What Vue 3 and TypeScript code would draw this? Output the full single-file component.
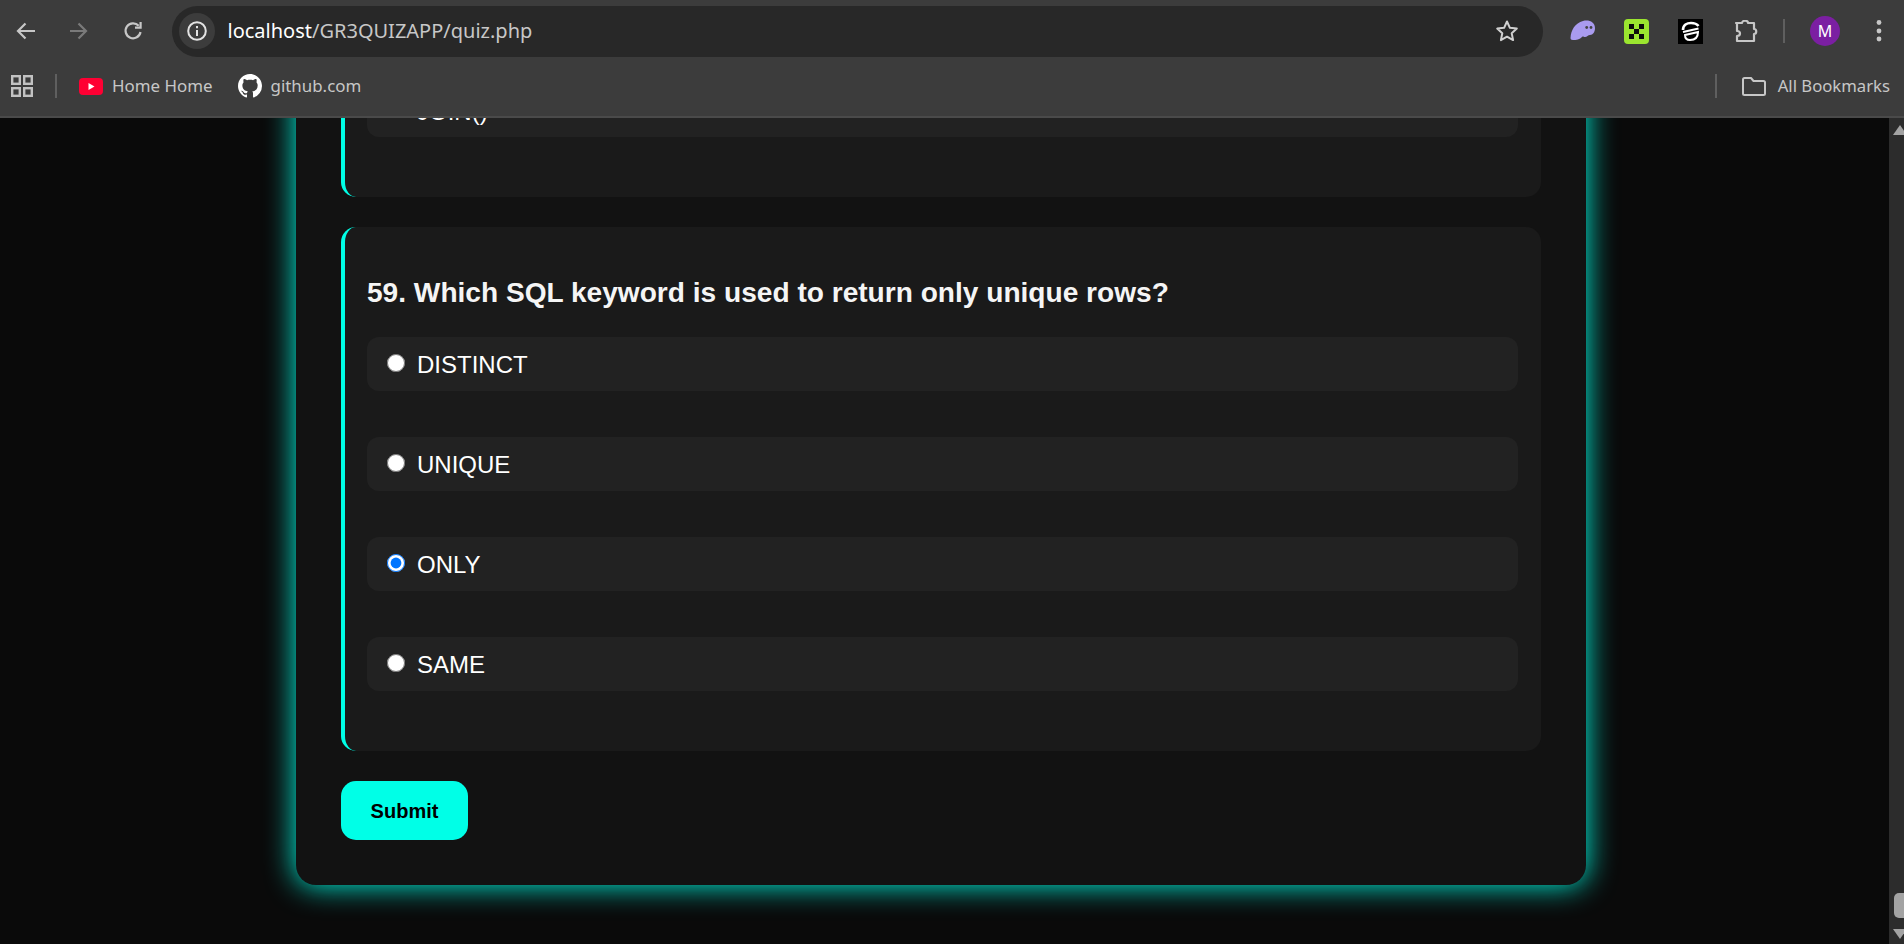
<script setup lang="ts">
const options: string[] = ['DISTINCT', 'UNIQUE', 'ONLY', 'SAME']
const selected = 'ONLY'
</script>

<template>
  <div class="window">
    <header class="chrome">
      <div class="toolbar">
        <svg class="nav back" width="19" height="18" viewBox="0 0 19 18" fill="none" stroke="#c7c7c7" stroke-width="2.2"><path d="M19 9H2M9.500 1.500 2 9l7.500 7.500" /></svg>
        <svg class="nav fwd" width="18" height="18" viewBox="0 0 18 18" fill="none" stroke="#7a7a7a" stroke-width="2.2"><path d="M0 9h16M8.500 1.500 16 9l-7.500 7.500" /></svg>
        <svg class="nav reload" width="20" height="20" viewBox="0 0 20 20" fill="none" stroke="#c7c7c7" stroke-width="2.2"><path d="M17.500 11a7.500 7.500 0 1 1-1.800-6.200" /><path d="M17.600 1v5.600H12" /></svg>
        <div class="omnibox">
          <span class="chip">
            <svg width="20" height="20" viewBox="0 0 20 20" fill="none" stroke="#e3e3e3" stroke-width="2"><circle cx="10" cy="10" r="8.800" /><path d="M10 9v6" /><path d="M10 5v2.200" /></svg>
          </span>
          <span class="url"><span class="host">localhost</span>/GR3QUIZAPP/quiz.php</span>
          <svg class="star" width="24" height="24" viewBox="0 0 24 24" fill="none" stroke="#d0d0d0" stroke-width="2" stroke-linejoin="round"><path d="m12 2.500 2.900 6.300 6.900.8-5.100 4.700 1.400 6.800-6.100-3.400-6.100 3.400 1.400-6.800-5.100-4.700 6.900-.8z" /></svg>
        </div>
        <svg class="ext ghost" width="26" height="22" viewBox="0 0 26 22"><path d="M.5 18C1 10 5 3 13 1c6-1.500 12 1 12 7 0 4-2 7-5 7-2 0-3 2-5 2-1.500 0-2-1-3 0-2 2.500-6 3-9 3-2 0-2.500-1-2.500-2z" fill="#a99bef" /><circle cx="16.700" cy="7.500" r="1.400" fill="#444" /><circle cx="21" cy="7.500" r="1.400" fill="#444" /></svg>
        <svg class="ext green" width="25" height="25" viewBox="0 0 25 25"><rect width="25" height="25" rx="4" fill="#9be52f" /><g fill="#0c0c0c"><rect x="5" y="5" width="5" height="5" /><rect x="15" y="5" width="5" height="5" /><rect x="10" y="10" width="5" height="5" /><rect x="5" y="15" width="5" height="5" /><rect x="15" y="15" width="5" height="5" /></g></svg>
        <svg class="ext black" width="25" height="25" viewBox="0 0 25 25" fill="none" stroke="#fff"><rect width="25" height="25" fill="#000" stroke="none" /><path d="M5 11C5 6 9 4 13 4c3 0 6 1 7.500 3" stroke-width="2.600" /><path d="M5 13 20.500 9.500" stroke-width="2" /><path d="M7 16 20 13c0 5-3 8-8 8-3 0-5-2-5-5z" stroke-width="2" /></svg>
        <svg class="ext puzzle" width="25" height="23" viewBox="0 0 25 23" fill="none" stroke="#c7c7c7" stroke-width="2.200" stroke-linejoin="round"><path d="M2 3h6c0-3 6-3 6 0h6v6c3 0 3 5 0 5v7H3v-5c2 0 3-1 3-2.500S5 11 3 11V3z" /></svg>
        <span class="vsep top-sep"></span>
        <span class="avatar">M</span>
        <svg class="dots" width="6" height="24" viewBox="0 0 6 24" fill="#c7c7c7"><circle cx="3" cy="3.500" r="2.400" /><circle cx="3" cy="12" r="2.400" /><circle cx="3" cy="20" r="2.400" /></svg>
      </div>
      <div class="bookmarks">
        <svg class="apps" width="22" height="22" viewBox="0 0 22 22" fill="none" stroke="#c2c2c2" stroke-width="2.400"><rect x="1.200" y="1.200" width="7.600" height="7.600" /><rect x="13.200" y="1.200" width="7.600" height="7.600" /><rect x="1.200" y="13.200" width="7.600" height="7.600" /><rect x="13.200" y="13.200" width="7.600" height="7.600" /></svg>
        <span class="vsep apps-sep"></span>
        <svg class="yt" width="24" height="17" viewBox="0 0 24 17"><rect width="24" height="17" rx="4" fill="#ff0033" /><path d="M9.500 5v7l6-3.500z" fill="#fff" /></svg>
        <span class="bm-text home">Home Home</span>
        <svg class="gh" width="24" height="24" viewBox="0 0 16 16" fill="#fff"><path d="M8 0C3.580 0 0 3.580 0 8c0 3.540 2.290 6.530 5.470 7.590.4.070.55-.17.55-.38 0-.19-.01-.82-.01-1.490-2.010.37-2.530-.49-2.690-.94-.09-.23-.48-.94-.82-1.130-.28-.15-.68-.52-.01-.53.63-.01 1.080.58 1.230.82.720 1.210 1.870.87 2.330.66.070-.52.280-.87.510-1.070-1.780-.2-3.640-.89-3.640-3.950 0-.87.310-1.590.820-2.150-.08-.2-.36-1.020.08-2.120 0 0 .67-.21 2.200.82.640-.18 1.320-.27 2-.27s1.360.09 2 .27c1.530-1.040 2.200-.82 2.200-.82.440 1.100.16 1.920.08 2.120.51.560.82 1.270.82 2.150 0 3.070-1.870 3.750-3.650 3.950.29.250.54.730.54 1.480 0 1.070-.01 1.930-.01 2.200 0 .21.150.46.550.38A8.010 8.010 0 0 0 16 8c0-4.420-3.580-8-8-8z" /></svg>
        <span class="bm-text">github.com</span>
        <span class="grow"></span>
        <span class="vsep bm-sep"></span>
        <svg class="folder" width="24" height="19" viewBox="0 0 24 19" fill="none" stroke="#c7c7c7" stroke-width="2" stroke-linejoin="round"><path d="M1 2.500A1.500 1.500 0 0 1 2.500 1H9l2.500 3h10A1.500 1.500 0 0 1 23 5.500v11a1.500 1.500 0 0 1-1.500 1.500h-19A1.500 1.500 0 0 1 1 16.500z" /></svg>
        <span class="bm-text all">All Bookmarks</span>
      </div>
    </header>

    <div class="viewport">
      <main class="page">
        <form class="card" @submit.prevent>
          <section class="question clipped">
            <div class="option"><span class="opt-text">JOIN()</span></div>
          </section>
          <section class="question">
            <h3>59. Which SQL keyword is used to return only unique rows?</h3>
            <label v-for="opt in options" :key="opt" class="option">
              <input type="radio" name="q59" :value="opt" :checked="opt === selected" />
              <span class="opt-label">{{ opt }}</span>
            </label>
          </section>
          <button type="submit" class="submit">Submit</button>
        </form>
      </main>
      <aside class="scrollbar">
        <span class="arrow up"></span>
        <span class="thumb"></span>
        <span class="arrow down"></span>
      </aside>
    </div>
  </div>
</template>

<style scoped>
.window {
  display: flex;
  flex-direction: column;
  height: 944px;
  overflow: hidden;
  font-family: "Liberation Sans", Arial, sans-serif;
}
.chrome {
  position: relative;
  z-index: 2;
  flex: none;
  height: 118px;
  box-sizing: border-box;
  background: #3c3c3c;
  border-bottom: 2px solid #4a4a4a;
  font-family: "Noto Sans", "Open Sans", sans-serif;
}
.toolbar {
  display: flex;
  align-items: center;
  height: 62px;
}
.nav { flex: none; }
.back { margin-left: 16px; }
.fwd { margin-left: 35px; }
.reload { margin-left: 35px; }
.omnibox {
  flex: none;
  display: flex;
  align-items: center;
  box-sizing: border-box;
  width: 1371px;
  height: 51px;
  margin-left: 29px;
  padding-left: 7px;
  border-radius: 26px;
  background: #282828;
}
.chip {
  display: flex;
  align-items: center;
  justify-content: center;
  width: 36px;
  height: 36px;
  border-radius: 50%;
  background: #3c3c3c;
}
.url {
  margin-left: 12.500px;
  padding-bottom: 1px;
  font-size: 20px;
  color: #c7c7c7;
}
.host { color: #fff; }
.star { margin-left: auto; margin-right: 24px; }
.ext { flex: none; }
.ghost { margin-left: 27px; }
.green { margin-left: 28px; }
.black { margin-left: 29px; }
.puzzle { margin-left: 31px; }
.vsep {
  flex: none;
  display: block;
  width: 2px;
  height: 24px;
  background: #5f5f5f;
}
.top-sep { margin-left: 24px; }
.avatar {
  flex: none;
  display: flex;
  align-items: center;
  justify-content: center;
  width: 30px;
  height: 30px;
  margin-left: 25px;
  border-radius: 50%;
  background: #7b1fa2;
  color: #fff;
  font-size: 16px;
}
.dots { margin-left: 36px; flex: none; }
.bookmarks {
  display: flex;
  align-items: center;
  height: 48px;
}
.apps { margin-left: 11px; flex: none; }
.apps-sep { margin-left: 22px; }
.yt { margin-left: 22px; flex: none; }
.bm-text {
  padding-bottom: 1px;
  font-size: 16.900px;
  color: #c7c7c7;
  white-space: nowrap;
}
.home { margin-left: 9px; }
.gh { margin: 0 9px 0 25px; flex: none; }
.grow { flex: 1; }
.folder { margin-left: 25px; flex: none; }
.bm-text.all { margin-left: 12px; margin-right: 14px; font-size: 16.700px; }

.viewport {
  flex: 1;
  display: flex;
  min-height: 0;
  background: #0a0a0a;
}
.page {
  flex: 1;
  min-width: 0;
}
.card {
  box-sizing: border-box;
  width: 1290px;
  margin: -80px 0 0 296px;
  padding: 45px;
  border-radius: 20px;
  background: #121212;
  box-shadow: 0 0 30px #00ffe7;
}
.question {
  padding: 50px 23px 60px 22px;
  margin-bottom: 30px;
  border-left: 4px solid #00ffe7;
  border-radius: 15px;
  background: #1a1a1a;
}
.question.clipped { padding-top: 0; }
h3 {
  margin: 0 0 29px;
  font-size: 28.100px;
  line-height: 31px;
  font-weight: 700;
  color: #f5f5f5;
}
.option {
  display: flex;
  align-items: center;
  gap: 12px;
  box-sizing: border-box;
  height: 54px;
  padding: 0 20px;
  border-radius: 12px;
  background: #222;
  font-size: 24px;
  color: #fff;
}
.option + .option { margin-top: 46px; }
.opt-label { padding-top: 2px; }
.opt-text { margin-left: 30px; padding-top: 4px; }
.option input {
  flex: none;
  width: 18px;
  height: 18px;
  margin: -2px 0 0;
}
.submit {
  display: block;
  width: 127px;
  height: 59px;
  padding: 1px 0 0;
  border: 0;
  border-radius: 15px;
  background: #00ffe7;
  color: #000;
  font-family: inherit;
  font-size: 20px;
  font-weight: 700;
}
.scrollbar {
  flex: none;
  display: flex;
  flex-direction: column;
  align-items: flex-start;
  width: 15px;
  overflow: hidden;
  background: #2c2c2c;
}
.arrow {
  width: 0;
  height: 0;
  margin-left: 4px;
  border-left: 7px solid transparent;
  border-right: 7px solid transparent;
}
.up {
  margin-top: 7px;
  border-bottom: 10px solid #a3a3a3;
}
.thumb {
  width: 10px;
  height: 25px;
  margin: auto 0 0 5px;
  border-radius: 5px 0 0 5px;
  background: #a3a3a3;
}
.down {
  margin-top: 11px;
  margin-bottom: 5px;
  border-top: 10px solid #a3a3a3;
}
</style>

<style>
html, body {
  margin: 0;
  background: #0a0a0a;
  overflow: hidden;
}
</style>
